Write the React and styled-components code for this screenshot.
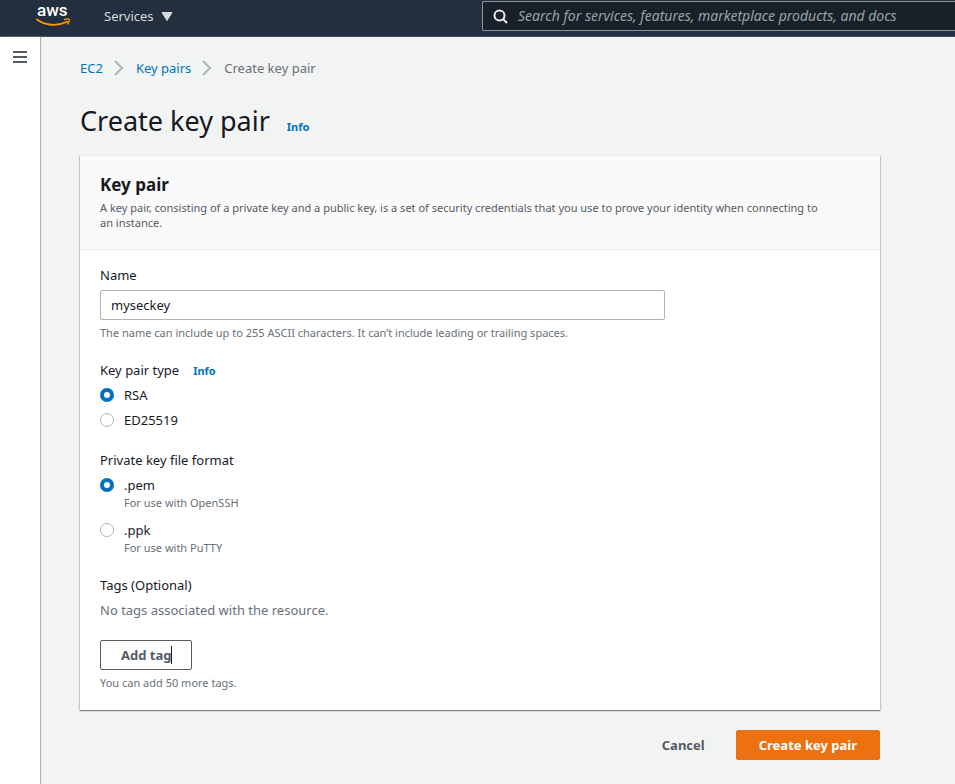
import React, { useState } from "react";
import styled, { createGlobalStyle } from "styled-components";

const GlobalStyle = createGlobalStyle`
  * { box-sizing: border-box; }
  body {
    margin: 0;
    background: #f2f3f3;
    color: #16191f;
    font-family: "Noto Sans", "Open Sans", sans-serif;
    font-size: 13px;
    line-height: 20px;
  }
  button, input { font: inherit; }
`;

const Page = styled.div`
  display: flex;
  flex-direction: column;
  min-height: 100vh;
`;

const TopBar = styled.header`
  display: flex;
  align-items: flex-start;
  height: 37px;
  padding-left: 36px;
  background: #232f3e;
  border-bottom: 1px solid #414d5c;
`;

const LogoLink = styled.a`
  display: block;
  height: 28px;
  svg { display: block; overflow: visible; }
`;

const ServicesButton = styled.button`
  display: flex;
  align-items: center;
  gap: 7px;
  margin-left: 32px;
  padding: 6px 0;
  border: 0;
  background: none;
  color: #d5dbdb;
  cursor: pointer;
`;

const SearchBox = styled.label`
  display: flex;
  flex: 1;
  align-items: center;
  gap: 10px;
  height: 30px;
  margin: 1px 0 0 auto;
  max-width: 473px;
  padding-left: 10px;
  border: 1px solid #879596;
  border-right: 0;
  border-radius: 2px 0 0 2px;
  background: #1a202a;
`;

const SearchInput = styled.input`
  flex: 1;
  min-width: 0;
  padding: 0;
  border: 0;
  outline: 0;
  background: none;
  color: #fff;
  font-size: 14px;
  &::placeholder {
    color: #95a5a6;
    font-style: italic;
    opacity: 1;
  }
`;

const Shell = styled.div`
  display: flex;
  flex: 1;
`;

const Rail = styled.nav`
  flex: none;
  width: 40px;
  background: #fff;
  box-shadow: 1px 0 1px 0 #aab7b8;
`;

const MenuButton = styled.button`
  display: flex;
  align-items: center;
  justify-content: center;
  width: 40px;
  height: 40px;
  padding: 0;
  border: 0;
  background: none;
  color: #545b64;
  cursor: pointer;
`;

const Main = styled.main`
  flex: 1;
  max-width: 880px;
  padding: 21px 40px 24px;
`;

const Crumbs = styled.ol`
  display: flex;
  align-items: center;
  gap: 11px;
  margin: 0;
  padding: 0;
  list-style: none;
  color: #687078;
`;

const Crumb = styled.li`
  display: flex;
  align-items: center;
  gap: 11px;
`;

const Link = styled.a`
  color: #0073bb;
  text-decoration: none;
`;

const InfoLink = styled(Link)`
  font-size: 11px;
  line-height: 15px;
  font-weight: 700;
`;

const TitleRow = styled.div`
  display: flex;
  align-items: baseline;
  gap: 17px;
  margin: 24px 0 16px;
`;

const Title = styled.h1`
  margin: 0;
  font-size: 27px;
  line-height: 37px;
  font-weight: 400;
`;

const Card = styled.section`
  background: #fff;
  border-top: 1px solid #eaeded;
  box-shadow: 0 1px 1px 0 rgba(0, 28, 36, 0.3), 1px 1px 1px 0 rgba(0, 28, 36, 0.15),
    -1px 1px 1px 0 rgba(0, 28, 36, 0.15);
`;

const CardHeader = styled.div`
  padding: 17px 20px 19px;
  background: #fafafa;
  border-bottom: 1px solid #eaeded;
`;

const CardTitle = styled.h2`
  margin: 0 0 3px;
  font-size: 17px;
  line-height: 24px;
  font-weight: 700;
`;

const CardText = styled.p`
  margin: 0;
  padding-right: 35px;
  color: #545b64;
  font-size: 11px;
  line-height: 15px;
`;

const CardBody = styled.div`
  display: flex;
  flex-direction: column;
  gap: 20px;
  padding: 15px 20px 20px;
`;

const Field = styled.div`
  display: flex;
  flex-direction: column;
  gap: 5px;
`;

const Columns = styled.div`
  display: grid;
  grid-template-columns: repeat(12, 1fr);
  column-gap: 20px;
`;

const TextInput = styled.input`
  grid-column: span 9;
  width: 100%;
  height: 30px;
  padding: 0 10px;
  border: 1px solid #aab7b8;
  border-radius: 2px;
  background: #fff;
  color: #16191f;
`;

const Hint = styled.p`
  margin: 0;
  color: #687078;
  font-size: 11px;
  line-height: 15px;
`;

const RadioGroup = styled.fieldset`
  display: flex;
  flex-direction: column;
  gap: ${(p) => (p.$roomy ? 10 : 5)}px;
  min-width: 0;
  margin: 0;
  padding: 0;
  border: 0;
`;

const Legend = styled.legend`
  display: flex;
  align-items: baseline;
  gap: 14px;
  margin-bottom: 5px;
  padding: 0;
`;

const Option = styled.label`
  display: grid;
  grid-template-columns: 14px 1fr;
  column-gap: 10px;
  cursor: pointer;
`;

const Radio = styled.input.attrs({ type: "radio" })`
  appearance: none;
  width: 14px;
  height: 14px;
  margin: 3px 0;
  border: 1px solid #aab7b8;
  border-radius: 50%;
  background: #fff;
  &:checked {
    border: 4px solid #0073bb;
  }
`;

const OptionHint = styled(Hint).attrs({ as: "span" })`
  grid-column: 2;
`;

const Muted = styled.p`
  margin: 0;
  color: #687078;
`;

const Button = styled.button`
  height: 30px;
  padding: 0 ${(p) => (p.$kind === "primary" ? 22 : 20)}px;
  border: 1px solid ${(p) => (p.$kind === "primary" ? "#ec7211" : p.$kind === "link" ? "transparent" : "#545b64")};
  border-radius: 2px;
  background: ${(p) => (p.$kind === "primary" ? "#ec7211" : p.$kind === "link" ? "transparent" : "#fff")};
  color: ${(p) => (p.$kind === "primary" ? "#fff" : "#545b64")};
  font-weight: 700;
  line-height: 20px;
  cursor: pointer;
`;

const TagActions = styled.div`
  display: flex;
  flex-direction: column;
  align-items: flex-start;
  gap: 5px;
  margin-top: 15px;
`;

const CaretLabel = styled.span`
  position: relative;
  &::after {
    content: "";
    position: absolute;
    top: 0;
    right: -1px;
    width: 1px;
    height: 18px;
    background: #16191f;
  }
`;

const Actions = styled.div`
  display: flex;
  justify-content: flex-end;
  gap: 10px;
  margin-top: 20px;
`;

function AwsLogo() {
  return (
    <svg width="36" height="28" viewBox="0 0 36 28" aria-label="aws" role="img">
      <text x="1" y="16" fill="#fff" fontFamily="Roboto, sans-serif" fontSize="17" fontWeight="500">aws</text>
      <path d="M1 19.5C9 25.4 21 26.8 31 21.8" fill="none" stroke="#f90" strokeWidth="1.8" strokeLinecap="round" />
      <path d="M28.4 19.6c2.2-.8 4.3-.8 4.8-.3.5.8-.3 3.4-1.7 4.7" fill="none" stroke="#f90" strokeWidth="1.3" strokeLinecap="round" />
    </svg>
  );
}

function Chevron() {
  return (
    <svg width="11" height="16" viewBox="0 0 11 16" aria-hidden="true">
      <path d="M1 1l7 7-7 7" fill="none" stroke="#aab7b8" strokeWidth="2" />
    </svg>
  );
}

function RadioOption({ group, value, hint, selected, onSelect }) {
  return (
    <Option>
      <Radio name={group} value={value} checked={selected === value} onChange={() => onSelect(value)} />
      <span>{value}</span>
      {hint && <OptionHint>{hint}</OptionHint>}
    </Option>
  );
}

export default function App() {
  const [name, setName] = useState("myseckey");
  const [type, setType] = useState("RSA");
  const [format, setFormat] = useState(".pem");

  return (
    <Page>
      <GlobalStyle />
      <TopBar>
        <LogoLink href="#home"><AwsLogo /></LogoLink>
        <ServicesButton type="button">
          Services
          <svg width="12" height="9" viewBox="0 0 12 9" aria-hidden="true">
            <path d="M1 .5h10L6 8.5z" fill="#d5dbdb" stroke="#d5dbdb" strokeLinejoin="round" />
          </svg>
        </ServicesButton>
        <SearchBox>
          <svg width="15" height="15" viewBox="0 0 15 15" fill="none" stroke="#eaeded" strokeWidth="2" aria-hidden="true">
            <circle cx="6.5" cy="6.5" r="5" />
            <path d="M10 10l4 4" />
          </svg>
          <SearchInput aria-label="Search" placeholder="Search for services, features, marketplace products, and docs" />
        </SearchBox>
      </TopBar>
      <Shell>
        <Rail>
          <MenuButton type="button" aria-label="Open navigation">
            <svg width="14" height="12" viewBox="0 0 14 12" fill="currentColor" aria-hidden="true">
              <path d="M0 0h14v2H0zM0 5h14v2H0zM0 10h14v2H0z" />
            </svg>
          </MenuButton>
        </Rail>
        <Main>
          <nav aria-label="Breadcrumbs">
            <Crumbs>
              <Crumb><Link href="#ec2">EC2</Link><Chevron /></Crumb>
              <Crumb><Link href="#key-pairs">Key pairs</Link><Chevron /></Crumb>
              <Crumb>Create key pair</Crumb>
            </Crumbs>
          </nav>
          <TitleRow>
            <Title>Create key pair</Title>
            <InfoLink href="#info">Info</InfoLink>
          </TitleRow>
          <Card>
            <CardHeader>
              <CardTitle>Key pair</CardTitle>
              <CardText>
                A key pair, consisting of a private key and a public key, is a set of security credentials that you
                use to prove your identity when connecting to an instance.
              </CardText>
            </CardHeader>
            <CardBody>
              <Field>
                <label htmlFor="key-name">Name</label>
                <Columns>
                  <TextInput id="key-name" value={name} onChange={(e) => setName(e.target.value)} />
                </Columns>
                <Hint>The name can include up to 255 ASCII characters. It can’t include leading or trailing spaces.</Hint>
              </Field>
              <RadioGroup>
                <Legend>Key pair type <InfoLink href="#type-info">Info</InfoLink></Legend>
                <RadioOption group="type" value="RSA" selected={type} onSelect={setType} />
                <RadioOption group="type" value="ED25519" selected={type} onSelect={setType} />
              </RadioGroup>
              <RadioGroup $roomy>
                <Legend>Private key file format</Legend>
                <RadioOption group="format" value=".pem" hint="For use with OpenSSH" selected={format} onSelect={setFormat} />
                <RadioOption group="format" value=".ppk" hint="For use with PuTTY" selected={format} onSelect={setFormat} />
              </RadioGroup>
              <Field>
                <span>Tags (Optional)</span>
                <Muted>No tags associated with the resource.</Muted>
                <TagActions>
                  <Button type="button"><CaretLabel>Add tag</CaretLabel></Button>
                  <Hint>You can add 50 more tags.</Hint>
                </TagActions>
              </Field>
            </CardBody>
          </Card>
          <Actions>
            <Button type="button" $kind="link">Cancel</Button>
            <Button type="button" $kind="primary">Create key pair</Button>
          </Actions>
        </Main>
      </Shell>
    </Page>
  );
}
